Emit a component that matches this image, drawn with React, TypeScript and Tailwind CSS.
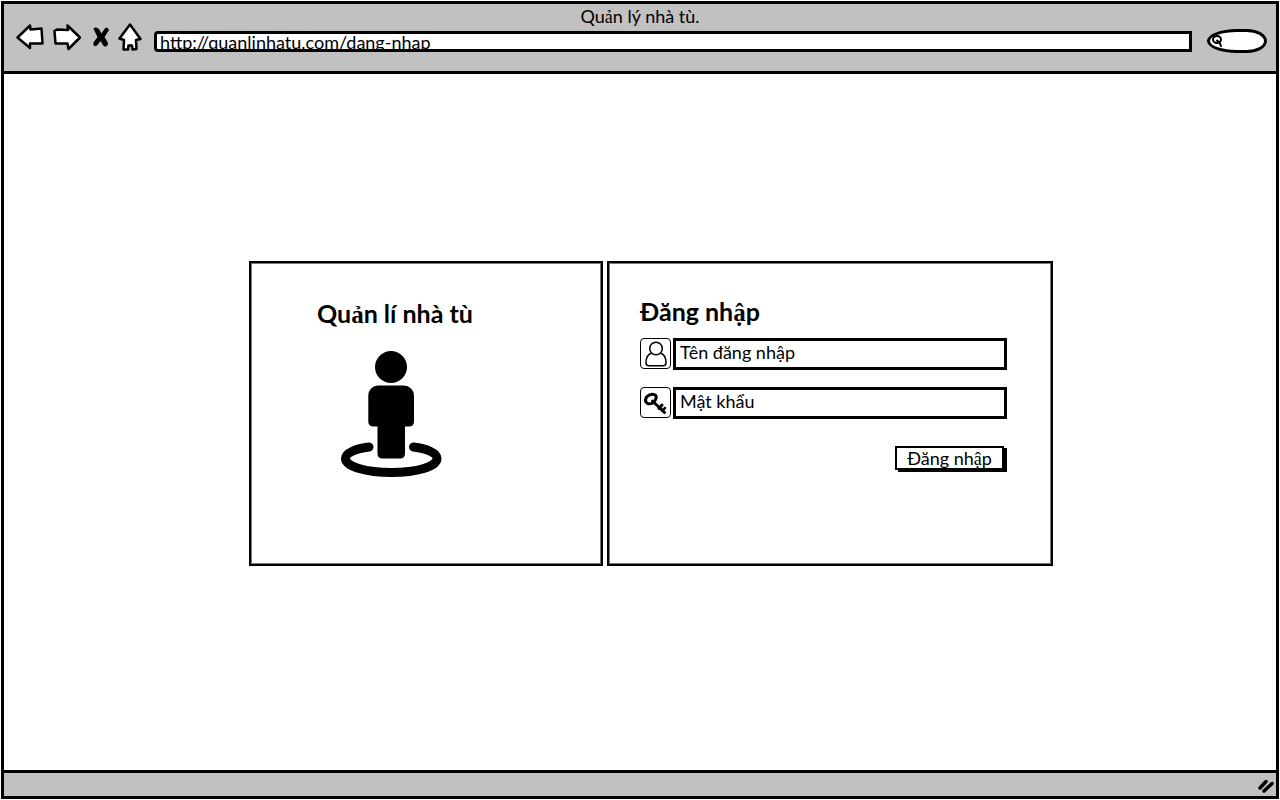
import React from "react";

const stroke = {
  fill: "#fff",
  stroke: "#000",
  strokeWidth: 2.5,
  strokeLinejoin: "round" as const,
  strokeLinecap: "round" as const,
};

function BackIcon() {
  return (
    <svg className="h-7 w-7" viewBox="0 0 28 28" {...stroke}>
      <path d="M1.5 14.5 14 2.5 14.5 6.5 25.5 5.5 26.5 20.5 14 20.5 14 25Z" />
    </svg>
  );
}

function ForwardIcon() {
  return (
    <svg className="h-7 w-7" viewBox="0 0 28 28" {...stroke}>
      <path d="M1.5 8 4 6.5 15 7 14.5 2.5 27 14.5 15.5 26 14.5 20.5 2.5 20.5Z" />
    </svg>
  );
}

function StopIcon() {
  return (
    <svg className="h-5 w-4" viewBox="0 0 16 20">
      <path
        d="M.5 2C1-.5 5 0 6.5 3L8.5 6.5 11.5 2C13-.5 16.5 1 15.5 4L11.5 10 15 16C15 20 11.5 20.5 10 18L7.5 14 4.5 18C2 20.5-.5 18.5.5 15.5L4.5 10Z"
        fill="#000"
      />
    </svg>
  );
}

function HomeIcon() {
  return (
    <svg className="h-7 w-6" viewBox="0 0 24 28" {...stroke}>
      <path d="M12 1.5 22.5 16 18 17 18.5 26 14.5 26.5 14 22.5 10.5 22.5 10 26.5 5.5 26.5 6 17 1.5 15.5Z" />
    </svg>
  );
}

function SearchIcon() {
  return (
    <svg className="h-3 w-3 shrink-0" viewBox="0 0 12 12" fill="none" stroke="#000" strokeWidth="2" strokeLinecap="round">
      <ellipse cx="6" cy="4.5" rx="4" ry="3.5" />
      <path d="M6 5.5 8 7C9.500 7.500 8.500 9 10 11" />
    </svg>
  );
}

function PersonIcon() {
  return (
    <svg className="h-32 w-26" viewBox="0 0 104 128" aria-hidden="true">
      <circle cx="52" cy="17" r="16" />
      <path d="M39 35.5H65A10 10 0 0 1 75 45.5V72A5 5 0 0 1 70 76.5H66V104A4.5 4.5 0 0 1 61.5 108.5H43A4.5 4.5 0 0 1 38.5 104V76.5H34A5 5 0 0 1 29.3 72V45.5A10 10 0 0 1 39 35.5Z" />
      <path
        d="M30 97C17 98.5 6.5 103 6.5 108.5C6.5 116.5 27 122.5 52.5 122.5S98 116.5 98 108.5C98 103 87.5 98.5 74.5 97"
        fill="none"
        stroke="#000"
        strokeWidth="9"
        strokeLinecap="round"
      />
    </svg>
  );
}

function UserIcon() {
  return (
    <svg className="h-7 w-7" viewBox="0 0 28 28" fill="none" stroke="#000" strokeWidth="1.5">
      <path d="M9.5 13C5 14.5 4 19 4 23Q4 25.7 7 25.7H21Q24 25.7 24 23C24 19 23 14.5 18.5 13" />
      <circle cx="14" cy="8.5" r="6.3" />
    </svg>
  );
}

function KeyIcon() {
  return (
    <svg className="h-7 w-7" viewBox="0 0 28 28" fill="none" stroke="#000" strokeWidth="3" strokeLinecap="round">
      <path d="M9 5.5C13 4.5 15.5 7 13.5 10.500C12.5 14 9 15.5 5.5 14.5C1.5 12 4 6.5 9 5.5Z" />
      <path d="M10.5 12 22.5 23.5M17 19.5 20 16" />
      <path d="M20.5 21.5 23 19" strokeWidth="2.5" />
    </svg>
  );
}

function GripIcon() {
  return (
    <svg className="h-4 w-5" viewBox="0 0 20 16" stroke="#000" strokeWidth="3.5" strokeLinecap="round">
      <path d="M4 11 10 4.500M8 14 16 6.5" />
    </svg>
  );
}

/** Sets vowels that carry a hook or a dot below in the serif face. */
function Sketch({ children }: { children: string }) {
  return (
    <>
      {children.split(/([ảậẩ])/).map((part, i) =>
        /^[ảậẩ]$/.test(part) ? (
          <span key={i} className="font-['Liberation_Serif',serif] leading-none">{part}</span>
        ) : (
          part
        ),
      )}
    </>
  );
}

type FieldProps = {
  id: string;
  label: string;
  type: string;
  icon: React.ReactNode;
};

function Field({ id, label, type, icon }: FieldProps) {
  return (
    <div className="flex items-center gap-0.5">
      <label
        htmlFor={id}
        aria-label={label}
        className="flex h-[31px] w-[31px] shrink-0 items-center justify-center rounded-sm border border-black"
      >
        {icon}
      </label>
      <input
        id={id}
        type={type}
        placeholder={label}
        className="h-8 min-w-0 flex-1 border-[3px] border-black bg-white px-1 pb-1 text-lg text-black outline-none placeholder:text-black placeholder:opacity-100"
      />
    </div>
  );
}

export default function App() {
  return (
    <div className="flex min-h-screen flex-col bg-white p-px font-['Lato','Liberation_Serif',serif] text-black">
      <div className="flex flex-1 flex-col border-[3px] border-black">
        <header className="flex h-[70px] flex-col border-b-[3px] border-black bg-[#c1c1c1]">
          <p className="h-[19px] text-center text-lg leading-6">
            <Sketch>Quản lý nhà tù.</Sketch>
          </p>
          <div className="flex items-start pr-[9px] pl-3">
            <nav className="flex items-center" aria-label="Điều hướng">
              <button type="button" aria-label="Quay lại"><BackIcon /></button>
              <button type="button" aria-label="Tiếp" className="ml-[9px]"><ForwardIcon /></button>
              <button type="button" aria-label="Dừng" className="ml-3"><StopIcon /></button>
              <button type="button" aria-label="Trang chủ" className="ml-[9px]"><HomeIcon /></button>
            </nav>
            <input
              type="text"
              aria-label="Địa chỉ"
              defaultValue="http://quanlinhatu.com/dang-nhap"
              className="mt-2 ml-3 h-[21px] min-w-0 flex-1 rounded-l-sm border-[3px] border-black bg-white pl-[3px] text-lg leading-4 outline-none"
            />
            <label className="mt-[6px] ml-[15px] flex h-6 w-[60px] shrink-0 items-center rounded-l-[50%] rounded-r-[20px_12px] border-[3px] border-black bg-white pl-px">
              <SearchIcon />
              <input type="search" aria-label="Tìm kiếm" className="w-full min-w-0 bg-transparent outline-none" />
            </label>
          </div>
        </header>

        <main className="flex flex-1 items-center justify-center gap-1 pb-[18px] pl-[22px]">
          <section className="h-[305px] w-[354px] border-2 border-black pt-[34px] pl-[66px] shadow-[inset_0_0_0_1px_#777]">
            <h1 className="h-8 text-[25px] leading-8 font-bold"><Sketch>Quản lí nhà tù</Sketch></h1>
            <div className="mt-[21px] ml-[22px]"><PersonIcon /></div>
          </section>

          <section className="h-[305px] w-[446px] border-2 border-black pt-8 pr-11 pl-[31px] shadow-[inset_0_0_0_1px_#777]">
            <h2 className="h-8 text-[25px] leading-8 font-bold"><Sketch>Đăng nhập</Sketch></h2>
            <form className="mt-[11px] flex flex-col gap-[17px]" onSubmit={(e) => e.preventDefault()}>
              <Field id="username" label="Tên đăng nhập" type="text" icon={<UserIcon />} />
              <Field id="password" label="Mật khẩu" type="password" icon={<KeyIcon />} />
              <button
                type="submit"
                className="mt-[10px] mr-[3px] h-6 w-[109px] self-end border-2 border-black bg-white text-lg leading-5 shadow-[3px_2px_0_#000]"
              >
                <Sketch>Đăng nhập</Sketch>
              </button>
            </form>
          </section>
        </main>

        <footer className="flex h-[26px] items-center justify-end border-t-[3px] border-black bg-[#c1c1c1]">
          <GripIcon />
        </footer>
      </div>
    </div>
  );
}
